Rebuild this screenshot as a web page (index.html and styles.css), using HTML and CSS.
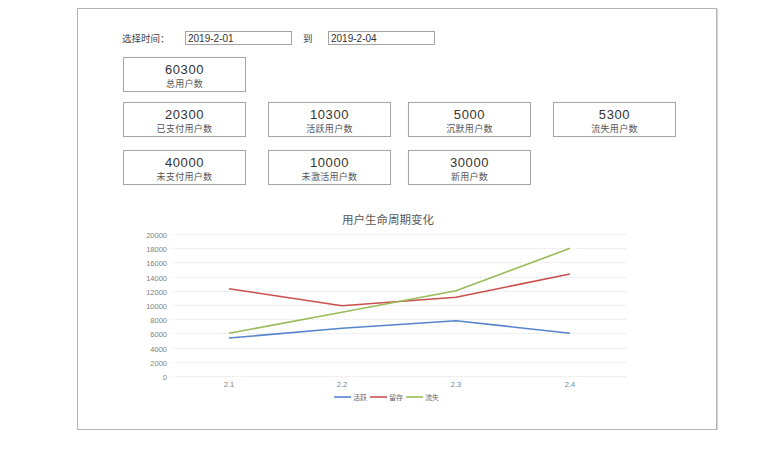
FILE: index.html
```html
<!DOCTYPE html>
<html lang="zh-CN">
<head>
  <meta charset="UTF-8" />
  <meta name="viewport" content="width=device-width, initial-scale=1.0"/>
  <title>用户生命周期</title>
  <link rel="stylesheet" href="styles.css">
</head>
<body>

<div class="panel">
  <div class="top">
    <div class="filter">
      <span class="filter-label">选择时间：</span>
      <input class="date" type="text" value="2019-2-01">
      <span class="to">到</span>
      <input class="date" type="text" value="2019-2-04">
    </div>

    <div class="cards row1">
      <div class="card"><div class="num">60300</div><div class="label">总用户数</div></div>
    </div>

    <div class="cards row2">
      <div class="card"><div class="num">20300</div><div class="label">已支付用户数</div></div>
      <div class="card"><div class="num">10300</div><div class="label">活跃用户数</div></div>
      <div class="card"><div class="num">5000</div><div class="label">沉默用户数</div></div>
      <div class="card"><div class="num">5300</div><div class="label">流失用户数</div></div>
    </div>

    <div class="cards row3">
      <div class="card"><div class="num">40000</div><div class="label">未支付用户数</div></div>
      <div class="card"><div class="num">10000</div><div class="label">未激活用户数</div></div>
      <div class="card"><div class="num">30000</div><div class="label">新用户数</div></div>
    </div>
  </div>

  <!-- 折线图 -->
  <svg class="chart" width="638" height="225" viewBox="78 195 638 225">
    <text class="chart-title" x="388" y="225" text-anchor="middle">用户生命周期变化</text>

    <g class="grid">
      <line x1="172" x2="626" y1="235.5" y2="235.5"/>
      <line x1="172" x2="626" y1="249.5" y2="249.5"/>
      <line x1="172" x2="626" y1="263.5" y2="263.5"/>
      <line x1="172" x2="626" y1="278.5" y2="278.5"/>
      <line x1="172" x2="626" y1="292.5" y2="292.5"/>
      <line x1="172" x2="626" y1="306.5" y2="306.5"/>
      <line x1="172" x2="626" y1="320.5" y2="320.5"/>
      <line x1="172" x2="626" y1="334.5" y2="334.5"/>
      <line x1="172" x2="626" y1="349.5" y2="349.5"/>
      <line x1="172" x2="626" y1="363.5" y2="363.5"/>
      <line x1="172" x2="626" y1="377.5" y2="377.5"/>
    </g>

    <g class="axis-y" text-anchor="end">
      <text x="167" y="238.5">20000</text>
      <text x="167" y="252.5">18000</text>
      <text x="167" y="266.5">16000</text>
      <text x="167" y="281.5">14000</text>
      <text x="167" y="295.5">12000</text>
      <text x="167" y="309.5">10000</text>
      <text x="167" y="323.5">8000</text>
      <text x="167" y="337.5">6000</text>
      <text x="167" y="352.5">4000</text>
      <text x="167" y="366.5">2000</text>
      <text x="167" y="380.5">0</text>
    </g>

    <g class="axis-x" text-anchor="middle">
      <text x="229" y="388">2.1</text>
      <text x="342" y="388">2.2</text>
      <text x="456" y="388">2.3</text>
      <text x="570" y="388">2.4</text>
    </g>

    <polyline class="line blue" points="229,339 342,329.3 456,321.7 570,334.3"/>
    <polyline class="line red" points="229,289.7 342,306.7 456,298.3 570,275"/>
    <polyline class="line green" points="229,334.3 342,313.3 456,291.7 570,249.3"/>

    <g class="legend">
      <line class="blue" x1="334" x2="351" y1="398" y2="398"/>
      <text x="353" y="400.5">活跃</text>
      <line class="red" x1="370" x2="387" y1="398" y2="398"/>
      <text x="389" y="400.5">留存</text>
      <line class="green" x1="406" x2="423" y1="398" y2="398"/>
      <text x="425" y="400.5">流失</text>
    </g>
  </svg>
</div>

</body>
</html>
```

FILE: styles.css
```css
body {
  margin: 0;
  font-family: 'Liberation Sans', 'Noto Sans CJK SC', sans-serif;
  background-color: #fff;
  color: #333;
}

.panel {
  width: 638px;
  height: 420px;
  margin: 8px 0 0 77px;
  border: 1px solid #b4b4b4;
  box-shadow: 1px 1px 1px rgba(0,0,0,0.15);
  background: #fff;
}

.top {
  padding: 22px 0 0 44px;
}

.filter {
  display: flex;
  align-items: center;
  height: 14px;
}

.filter-label {
  width: 63px;
  font-size: 9.5px;
  color: #444;
}

.date {
  box-sizing: border-box;
  width: 107px;
  height: 14px;
  margin: 0;
  padding: 0 2px;
  border: 1px solid #a3a3a3;
  font-family: 'Liberation Sans', sans-serif;
  font-size: 10px;
  color: #333;
  outline: none;
}

.to {
  width: 25px;
  padding-left: 11px;
  font-size: 9.5px;
  color: #444;
}

.cards {
  display: grid;
  grid-template-columns: 145px 140px 145px 145px;
  padding-left: 1px;
}

.row1 { margin-top: 12px; }
.row2 { margin-top: 10px; }
.row3 { margin-top: 13px; }

.card {
  box-sizing: border-box;
  width: 123px;
  height: 35px;
  padding-top: 4px;
  border: 1px solid #a6a6a6;
  box-shadow: 0 0 1px rgba(0,0,0,0.1);
  text-align: center;
}

.card .num {
  font-size: 13px;
  line-height: 16px;
  letter-spacing: 0.6px;
  color: #333;
}

.card .label {
  font-size: 9px;
  line-height: 12px;
  letter-spacing: 0.3px;
  color: #555;
}

.chart {
  display: block;
  margin-top: 9px;
}

.chart-title {
  font-size: 11.5px;
  fill: #595959;
}

.grid line {
  stroke: #ececec;
  stroke-width: 1;
  stroke-dasharray: 3 1;
}

.axis-y text,
.axis-x text {
  font-size: 7.5px;
  fill: #808080;
}

.line {
  fill: none;
  stroke-width: 1.6;
  stroke-linejoin: round;
}

.legend line {
  stroke-width: 1.6;
}

.legend text {
  font-size: 7px;
  fill: #666;
}

.blue { stroke: #5585cc; }
.red { stroke: #c9504d; }
.green { stroke: #9bbb59; }
```
